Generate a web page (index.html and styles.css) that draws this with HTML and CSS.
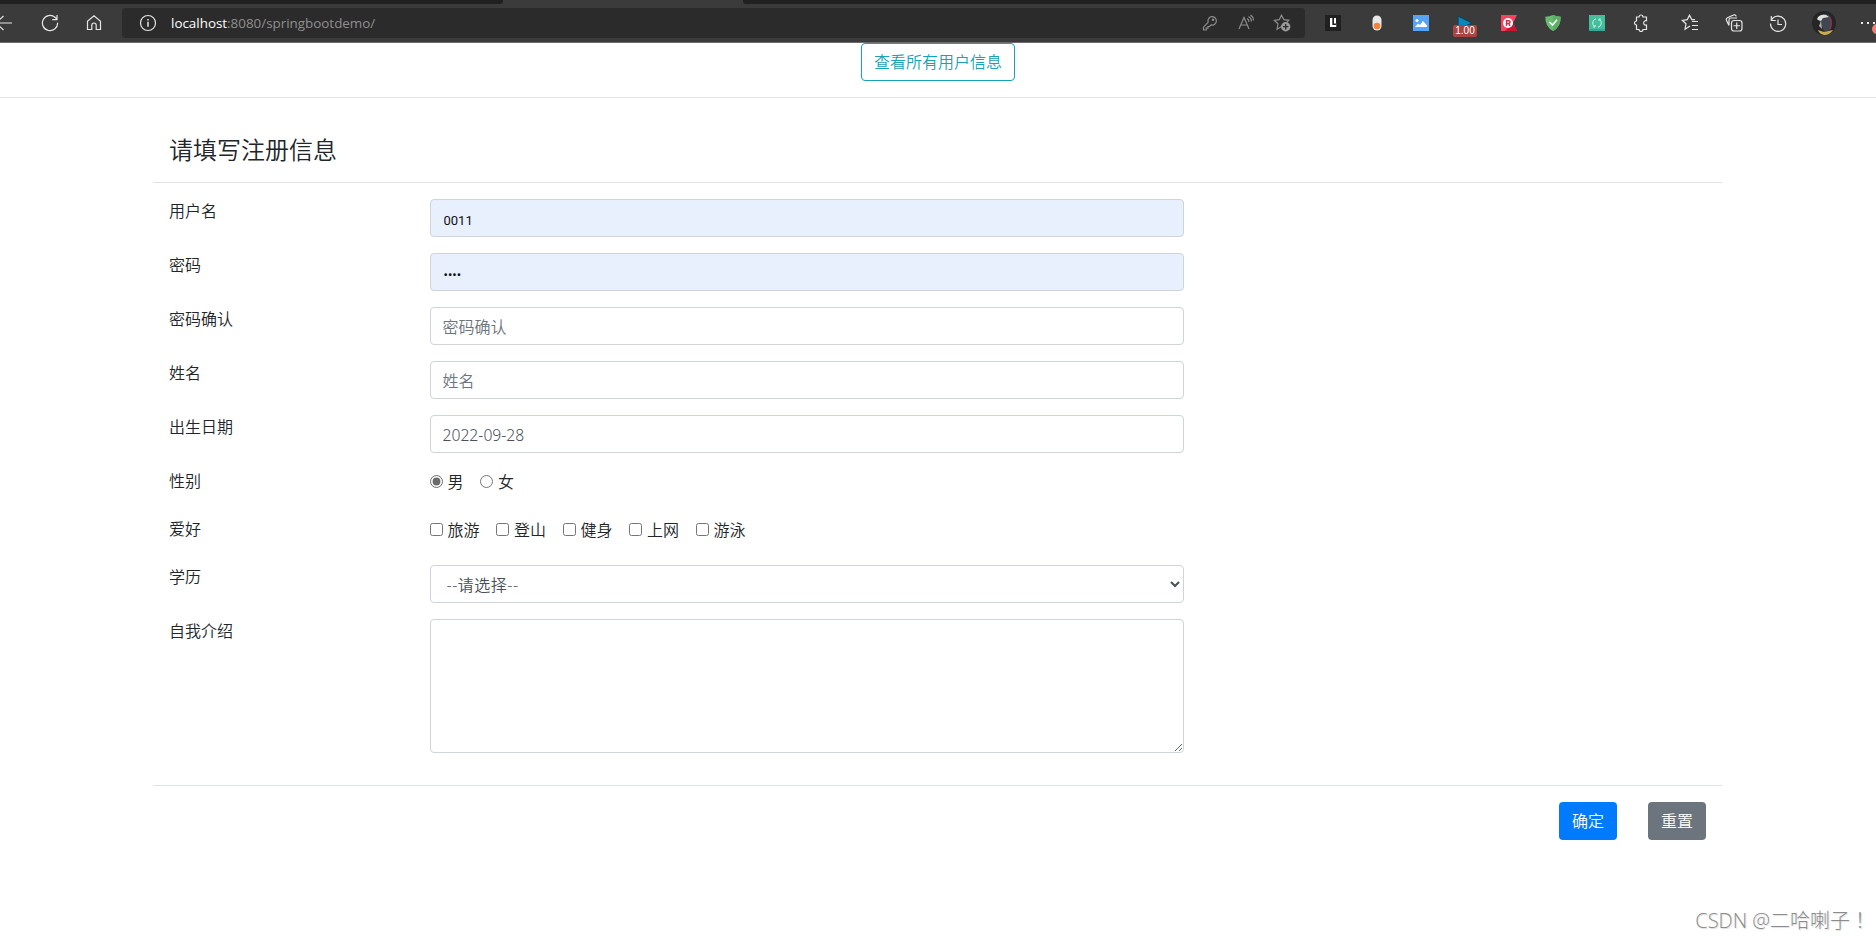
FILE: index.html
```html
<!DOCTYPE html>
<html lang="zh-CN">
<head>
    <meta charset="UTF-8">
    <title>用户注册</title>
    <link rel="stylesheet" href="styles.css">
</head>
<body>
<div class="browser">
    <div class="tabs">
        <div class="tab-left"></div>
        <div class="tab-active"></div>
        <div class="tab-right"></div>
    </div>
    <div class="toolbar">
        <div class="tool tool-back">
            <svg width="20" height="16" viewBox="0 0 20 16"><path d="M18 8H2M9.500 1L2 8l7.500 7"/></svg>
        </div>
        <div class="tool">
            <svg width="18" height="18" viewBox="0 0 18 18"><path d="M16.6 8.6A7.6 7.6 0 1 1 14 3.3L16 5.2M16 1v4.7h-4.8"/></svg>
        </div>
        <div class="tool">
            <svg width="16" height="18" viewBox="0 0 16 18"><path d="M1.5 7.2L8 1.7l6.500 5.500v8.300h-4.300v-4.300a2.200 2.200 0 0 0-4.400 0v4.300H1.500z"/></svg>
        </div>
        <div class="address">
            <svg class="info" width="18" height="18" viewBox="0 0 18 18"><circle cx="9" cy="9" r="7.500"/><path d="M9 7.800v5M9 5v1.400" stroke-width="1.500"/></svg>
            <div class="url"><b>localhost</b>:8080/springbootdemo/</div>
            <div class="address-tool">
                <svg width="16" height="16" viewBox="0 0 16 16"><path d="M6.200 7.200a4.200 4.200 0 1 1 3 2.700L7.500 11.500H6v1.700H4.300V15H1.500v-2.800z"/><circle cx="11" cy="4.800" r=".7"/></svg>
            </div>
            <div class="address-tool">
                <svg width="18" height="18" viewBox="0 0 18 18"><path d="M2 15L7 3.500 12 15M3.800 11h6.400M10 4.500q2 1 2 3.500M11.500 2.500q3 1.500 3 5M13.500 1q3 2 3 5.500"/></svg>
            </div>
            <div class="address-tool">
                <svg width="18" height="18" viewBox="0 0 18 18"><path d="M8.500 12.500L4 15.200l1-5.400L1.300 6.300l5-.7L8.500 1.200l2.300 4.400 5 .7-2 2"/><circle class="fill" cx="12.700" cy="12.700" r="4.700"/><path d="M12.700 10v5.400M10 12.700h5.400" stroke="#2b2b2b" stroke-width="1.300"/></svg>
            </div>
        </div>
        <div class="tool">
            <svg class="plain" width="16" height="16" viewBox="0 0 16 16"><rect width="16" height="16" fill="#202020"/><path d="M5 3h2.300v7H11V3H9v5.500h2.200V12H5z" fill="#fff"/></svg>
        </div>
        <div class="tool">
            <svg class="plain" width="12" height="16" viewBox="0 0 12 16"><rect x="1.500" y=".5" width="9" height="15" rx="4.500" fill="#e8e8e8"/><circle cx="6" cy="11" r="3.300" fill="#f48237"/></svg>
        </div>
        <div class="tool">
            <svg class="plain" width="16" height="16" viewBox="0 0 16 16"><rect width="16" height="16" fill="#57a4f7"/><circle cx="4" cy="5.500" r="1.500" fill="#fff"/><path d="M2 12l3-3.500L7 10l3-4 4 4.500V12z" fill="#fff"/></svg>
        </div>
        <div class="tool">
            <svg class="plain" width="16" height="16" viewBox="0 0 16 16"><path d="M1 1l14 7-14 7z" fill="#0a87bd" stroke="#164256"/></svg>
            <span class="badge">1.00</span>
        </div>
        <div class="tool">
            <svg class="plain" width="16" height="16" viewBox="0 0 16 16"><path d="M0 0h16l-4 8 4 8H0z" fill="#f94161"/><path d="M12 8l4 8H4z" fill="#c9152f"/><circle cx="7" cy="8" r="5" fill="#fff"/><path d="M5.500 11V5.700h2.200a1.400 1.400 0 0 1 0 2.800H5.500M7.700 8.500L9 11" fill="none" stroke="#d32840" stroke-width="1.400"/></svg>
        </div>
        <div class="tool">
            <svg class="plain" width="16" height="16" viewBox="0 0 16 16"><path d="M8 0q4 1.700 7.700 1.800Q16 12 8 16 0 12 .3 1.800 4 1.700 8 0z" fill="#68bc71"/><path d="M8 0q4 1.700 7.700 1.800Q16 12 8 16z" fill="#5caf65"/><path d="M4.500 7l3 3L12 4.800" fill="none" stroke="#fff" stroke-width="1.600"/></svg>
        </div>
        <div class="tool">
            <svg class="plain" width="16" height="16" viewBox="0 0 16 16"><rect width="16" height="16" fill="#44bf9b"/><path d="M0 14h16v2H0z" fill="#31a99b"/><path d="M7 3.800A4.300 4.300 0 0 0 5.500 11.500M4 12h2v-2M9 12.200A4.300 4.300 0 0 0 10.500 4.500M12 4h-2v2" fill="none" stroke="#d9f8ed" stroke-width=".9"/></svg>
        </div>
        <div class="tool">
            <svg width="16" height="18" viewBox="0 0 16 18"><path d="M3.500 3H6a2 2 0 0 1 4 0h3.500v3.800a2.200 2.200 0 1 0 0 4.200v4.500H10a2 2 0 0 1-4 0H3.500V11a2 2 0 0 1 0-4z"/></svg>
        </div>
        <div class="divider"></div>
        <div class="tool">
            <svg width="18" height="18" viewBox="0 0 18 18"><path d="M9 12L4 15.200l1-5.400L1.300 6.300l5-.7L8.500 1.200l2.300 4.400H14M11 7.500h6M11 11.500h6M11 15.500h6"/></svg>
        </div>
        <div class="tool">
            <svg width="18" height="18" viewBox="0 0 18 18"><path d="M4 11.500L1.500 6.400a2 2 0 0 1 1-2.600L8.400 1a2 2 0 0 1 2.800 1.500M4 11V6a2 2 0 0 1 2-2h6"/><rect x="6.500" y="6.500" width="10.500" height="10.500" rx="2.500"/><path d="M11.750 8.500v6.500M8.500 11.750h6.500"/></svg>
        </div>
        <div class="tool">
            <svg width="18" height="18" viewBox="0 0 18 18"><path d="M2.300 2v4.500h4.500M2.500 6A7.600 7.600 0 1 1 1.500 9.500M9 5.500v5h4"/></svg>
        </div>
        <div class="tool tool-avatar">
            <svg class="plain" width="24" height="24" viewBox="0 0 24 24"><circle cx="12" cy="12" r="12" fill="#252525"/><path d="M6 8q2-5 8-5 5 1 6 7l-2 9-6 2-3-8z" fill="#414750"/><path d="M5 8q2-5 9-4l3 2-6 1-2 3-3-1z" fill="#dce0df"/><path d="M9 10l-2 5 3 3z" fill="#aab1b3"/><path d="M17 6q4 5 1 12" fill="none" stroke="#8c3444" stroke-width="1.500"/><path d="M6 19l6 2 9-2q-3 5-9 5-5-1-6-5z" fill="#c9ad4e"/></svg>
        </div>
        <div class="tool tool-more">
            <svg class="plain" width="16" height="16" viewBox="0 0 16 16"><path d="M1 7h2v2H1zM7 7h2v2H7zM13 7h2v2h-2z" fill="#eee"/></svg>
            <span class="alert-dot"></span>
        </div>
    </div>
</div>

<div class="top">
    <button type="button" class="btn btn-outline-info">查看所有用户信息</button>
</div>
<hr>
<form class="container" autocomplete="off">
    <div class="form-header">
        <h4>请填写注册信息</h4>
    </div>
    <div class="form-body">
        <div class="row">
            <label for="username">用户名</label>
            <div class="field"><input id="username" type="text" class="form-control filled" value="0011"></div>
        </div>
        <div class="row">
            <label for="password">密码</label>
            <div class="field"><input id="password" type="password" class="form-control filled" value="0011"></div>
        </div>
        <div class="row">
            <label for="password2">密码确认</label>
            <div class="field"><input id="password2" type="password" class="form-control" placeholder="密码确认"></div>
        </div>
        <div class="row">
            <label for="name">姓名</label>
            <div class="field"><input id="name" type="text" class="form-control" placeholder="姓名"></div>
        </div>
        <div class="row">
            <label for="birthday">出生日期</label>
            <div class="field"><input id="birthday" type="text" class="form-control date" value="2022-09-28"></div>
        </div>
        <div class="row">
            <label>性别</label>
            <div class="field checks">
                <label class="check"><input type="radio" name="sex" value="1" checked>男</label>
                <label class="check"><input type="radio" name="sex" value="0">女</label>
            </div>
        </div>
        <div class="row">
            <label>爱好</label>
            <div class="field checks">
                <label class="check"><input type="checkbox" name="hobby">旅游</label>
                <label class="check"><input type="checkbox" name="hobby">登山</label>
                <label class="check"><input type="checkbox" name="hobby">健身</label>
                <label class="check"><input type="checkbox" name="hobby">上网</label>
                <label class="check"><input type="checkbox" name="hobby">游泳</label>
            </div>
        </div>
        <div class="row">
            <label for="edu">学历</label>
            <div class="field">
                <select id="edu" class="form-control">
                    <option>--请选择--</option>
                </select>
            </div>
        </div>
        <div class="row">
            <label for="intro">自我介绍</label>
            <div class="field"><textarea id="intro" class="form-control" rows="5"></textarea></div>
        </div>
    </div>
    <div class="form-footer">
        <button type="button" class="btn btn-primary">确定</button>
        <button type="reset" class="btn btn-secondary">重置</button>
    </div>
</form>
<div class="watermark">CSDN @二哈喇子<span lang="zh-TW">！</span></div>
</body>
</html>
```
FILE: styles.css
```css
*, *::before, *::after {
    box-sizing: border-box;
}

body {
    margin: 0;
    height: 940px;
    overflow: hidden;
    font-family: "Open Sans", "Noto Sans CJK SC", sans-serif;
    font-size: 16px;
    font-weight: 350;
    line-height: 1.5;
    color: #212529;
    background-color: #fff;
}

/* browser bar */
.browser {
    height: 43px;
    background-color: #3b3b3b;
    border-bottom: 1px solid #6c6c6c;
    overflow: hidden;
}

.tabs {
    display: flex;
    height: 4px;
}

.tab-left {
    width: 503px;
    background-color: #202020;
    border-bottom-right-radius: 3px;
}

.tab-active {
    width: 240px;
}

.tab-right {
    flex: 1;
    background-color: #202020;
    border-bottom-left-radius: 3px;
}

.toolbar {
    display: flex;
    align-items: center;
    height: 38px;
}

.toolbar svg {
    display: block;
    flex: none;
    fill: none;
    stroke: #e6e6e6;
    stroke-width: 1.2;
}

.toolbar svg.plain {
    stroke: none;
}

.tool {
    position: relative;
    display: flex;
    flex: none;
    align-items: center;
    justify-content: center;
    width: 44px;
    height: 38px;
}

.tool-back {
    margin-left: -18px;
    margin-right: 2px;
}

.tool-avatar {
    width: 48px;
}

.tool-more {
    width: 40px;
}

.address {
    display: flex;
    flex: none;
    align-items: center;
    width: 1183px;
    height: 30px;
    margin: 0 6px;
    padding: 0 5px 0 17px;
    border-radius: 4px;
    background-color: #2b2b2b;
}

.url {
    flex: 1;
    margin-left: 14px;
    font-size: 13.4px;
    font-weight: 400;
    line-height: 20px;
    color: #8f8f8f;
}

.url b {
    font-weight: 400;
    color: #fff;
}

.address-tool {
    display: flex;
    justify-content: center;
    width: 36px;
}

.toolbar .address-tool svg {
    stroke: #8c8c8c;
}

.toolbar .address-tool .fill {
    fill: #9a9a9a;
    stroke: none;
}

.badge {
    position: absolute;
    left: 10px;
    top: 21px;
    width: 24px;
    height: 12px;
    border-radius: 2px;
    font: 10px/12px "Liberation Sans", Arial, sans-serif;
    text-align: center;
    color: #fff;
    background-color: #a94442;
}

.divider {
    width: 1px;
    height: 16px;
    margin: 0 3px 0 2px;
    background-color: #666;
}

.alert-dot {
    position: absolute;
    left: 24px;
    top: 20px;
    width: 10px;
    height: 10px;
    border-radius: 50%;
    background-color: #f47c75;
}

/* page */
.top {
    text-align: center;
    height: 38px;
}

hr {
    margin: 16px 0;
    border: 0;
    border-top: 1px solid #e5e5e5;
}

.btn {
    height: 38px;
    padding: 6px 12px;
    border: 1px solid transparent;
    border-radius: 4px;
    font: inherit;
    vertical-align: top;
}

.btn-outline-info {
    color: #17a2b8;
    border-color: #17a2b8;
    background-color: transparent;
}

.btn-primary {
    color: #fff;
    background-color: #007bff;
}

.btn-secondary {
    color: #fff;
    background-color: #6c757d;
}

.container {
    width: 1569px;
    margin: 0 0 0 153px;
}

.form-header {
    padding: 18px 16px 14px;
    border-bottom: 1px solid #dee2e6;
}

h4 {
    margin: 0;
    font-size: 24px;
    font-weight: inherit;
    line-height: 36px;
}

.form-body {
    padding: 16px 0;
}

.row {
    display: flex;
    align-items: flex-start;
    margin-bottom: 16px;
}

.row > label {
    width: 16.6667%;
    height: 24px;
    padding: 0 15px 0 16px;
}

.field {
    width: 50%;
    padding: 0 15px;
}

.form-control {
    display: block;
    width: 100%;
    height: 38px;
    padding: 8px 12px 6px;
    border: 1px solid #ced4da;
    border-radius: 4px;
    font: inherit;
    color: #495057;
    background-color: #fff;
}

.form-control::placeholder {
    color: #6c757d;
    opacity: 1;
}

.filled {
    padding: 10px 13px 6px;
    font-family: Roboto, sans-serif;
    font-size: 13px;
    font-weight: 400;
    color: #111;
    background-color: #e8f0fe;
}

.date {
    font-family: "Noto Sans", "Open Sans", sans-serif;
    font-size: 15.7px;
}

select.form-control {
    padding-top: 7px;
    letter-spacing: .5px;
}

textarea.form-control {
    height: 134px;
    resize: vertical;
}

.checks {
    display: flex;
    gap: 16.5px;
    height: 32px;
}

.check {
    display: flex;
    align-items: center;
    height: 25px;
}

.check input {
    width: 13px;
    height: 13px;
    margin: 0 5px 0 0;
    accent-color: #6b6b6b;
}

.form-footer {
    display: flex;
    justify-content: flex-end;
    gap: 31px;
    padding: 16px;
    border-top: 1px solid #dee2e6;
}

.watermark {
    position: absolute;
    right: 6px;
    bottom: 4px;
    font-size: 20px;
    font-weight: 300;
    color: #8c8c8c;
    text-shadow: 1px 1px 1px #ddd;
}

.watermark span {
    font-family: "Noto Sans CJK TC", sans-serif;
}
```
